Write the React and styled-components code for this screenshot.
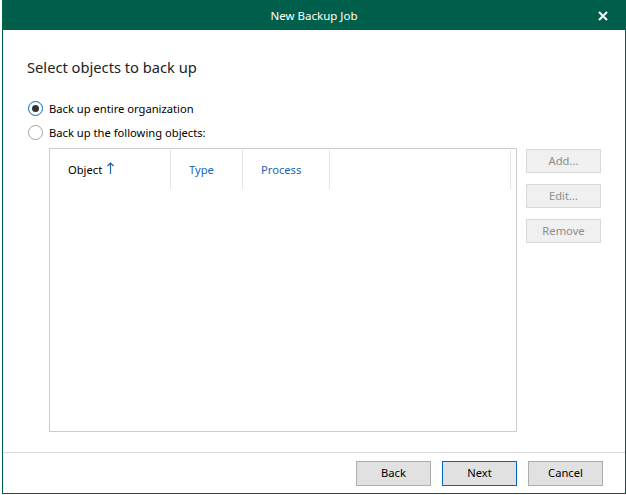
import styled, { createGlobalStyle } from 'styled-components'

const GlobalStyle = createGlobalStyle`
    html, body {
        margin: 0;
        padding: 0;
        background: #ffffff;
    }
    body {
        font-family: "Segoe UI", "Noto Sans", "Open Sans", sans-serif;
        font-size: 11.2px;
        color: #000000;
    }
`

const columns = [
    { label: 'Object', width: 121, sorted: true },
    { label: 'Type', width: 72 },
    { label: 'Process', width: 87 },
    { label: '', width: 181 },
]

export default function App() {
    return (
        <>
            <GlobalStyle />
            <Window>
                <TitleBar>
                    <Title>New Backup Job</Title>
                    <CloseBtn>
                        <svg width="10" height="10" viewBox="0 0 10 10">
                            <path d="M1 1 L9 9 M9 1 L1 9" stroke="#ffffff" strokeWidth="2" />
                        </svg>
                    </CloseBtn>
                </TitleBar>
                <Content>
                    <Heading>Select objects to back up</Heading>
                    <Options>
                        <RadioRow>
                            <Radio checked />
                            <span>Back up entire organization</span>
                        </RadioRow>
                        <RadioRow>
                            <Radio />
                            <span>Back up the following objects:</span>
                        </RadioRow>
                    </Options>
                    <ObjectsArea>
                        <Table>
                            <HeaderRow>
                                {columns.map((c, i) => (
                                    <HeaderCell key={i} width={c.width} sorted={c.sorted}>
                                        {c.label}
                                        {c.sorted ?
                                            <SortArrow width="7" height="12" viewBox="0 0 7 12">
                                                <path d="M3.5 1 V12 M0.5 4 L3.5 1 L6.5 4" stroke="#1a64b4" strokeWidth="1.2" fill="none" />
                                            </SortArrow> :
                                            null}
                                    </HeaderCell>
                                ))}
                            </HeaderRow>
                        </Table>
                        <SideButtons>
                            <SideButton disabled>Add...</SideButton>
                            <SideButton disabled>Edit...</SideButton>
                            <SideButton disabled>Remove</SideButton>
                        </SideButtons>
                    </ObjectsArea>
                </Content>
                <Footer>
                    <FooterButton>Back</FooterButton>
                    <FooterButton primary>Next</FooterButton>
                    <FooterButton>Cancel</FooterButton>
                </Footer>
            </Window>
        </>
    )
}

const Window = styled.div`
    margin-left: 2px;
    width: 624px;
    height: 494px;
    box-sizing: border-box;
    border: 1px solid #005f4b;
    border-top: none;
    display: flex;
    flex-direction: column;
    background: #ffffff;
`

const TitleBar = styled.div`
    height: 30px;
    margin: 0 -1px;
    background: #005f4b;
    color: #ffffff;
    display: flex;
    align-items: center;
    justify-content: center;
    position: relative;
`

const Title = styled.div`
    font-size: 11.5px;
    padding-top: 1px;
`

const CloseBtn = styled.div`
    position: absolute;
    right: 18px;
    top: 11px;
    display: flex;
`

const Content = styled.div`
    flex: 1;
    padding: 26px 23px 0 24px;
    display: flex;
    flex-direction: column;
`

const Heading = styled.div`
    font-size: 14.7px;
    line-height: 22px;
    color: #222222;
`

const Options = styled.div`
    margin-top: 18px;
    display: flex;
    flex-direction: column;
`

const RadioRow = styled.label`
    display: flex;
    align-items: center;
    gap: 6px;
    height: 24px;
    color: #000000;
`

const Radio = styled.span`
    width: 15px;
    height: 15px;
    box-sizing: border-box;
    border-radius: 50%;
    border: 1px solid ${p => p.checked ? '#0067c0' : '#a0a0a0'};
    display: flex;
    align-items: center;
    justify-content: center;
    margin-left: 1px;
    &::after {
        content: '';
        width: 7px;
        height: 7px;
        border-radius: 50%;
        background: #333333;
        display: ${p => p.checked ? 'block' : 'none'};
    }
`

const ObjectsArea = styled.div`
    margin-top: 4px;
    margin-left: 22px;
    display: flex;
    gap: 9px;
    align-items: flex-start;
`

const Table = styled.div`
    width: 468px;
    height: 284px;
    box-sizing: border-box;
    border: 1px solid #cccccc;
`

const HeaderRow = styled.div`
    display: flex;
    height: 39px;
    padding-top: 1px;
`

const HeaderCell = styled.div`
    width: ${p => p.width}px;
    box-sizing: border-box;
    border-right: 1px solid #e3e3e3;
    padding-left: 18px;
    padding-bottom: 1px;
    display: flex;
    align-items: center;
    color: ${p => p.sorted ? '#000000' : '#1a64b4'};
`

const SortArrow = styled.svg`
    margin-left: 5px;
    margin-top: -2px;
`

const SideButtons = styled.div`
    display: flex;
    flex-direction: column;
    gap: 11px;
    margin-top: 1px;
`

const SideButton = styled.button`
    width: 75px;
    height: 24px;
    box-sizing: border-box;
    background: #f0f0f0;
    border: 1px solid #d9d9d9;
    color: #8c8c8c;
    font: inherit;
    padding: 0 0 1px;
`

const Footer = styled.div`
    height: 41px;
    border-top: 1px solid #d6d6d6;
    display: flex;
    justify-content: flex-end;
    gap: 11px;
    padding: 8px 22px 0 0;
    box-sizing: border-box;
`

const FooterButton = styled.button`
    width: 75px;
    height: 25px;
    box-sizing: border-box;
    background: #e1e1e1;
    border: 1px solid ${p => p.primary ? '#0067c0' : '#adadad'};
    color: #000000;
    font: inherit;
    padding: 0 0 2px;
`
